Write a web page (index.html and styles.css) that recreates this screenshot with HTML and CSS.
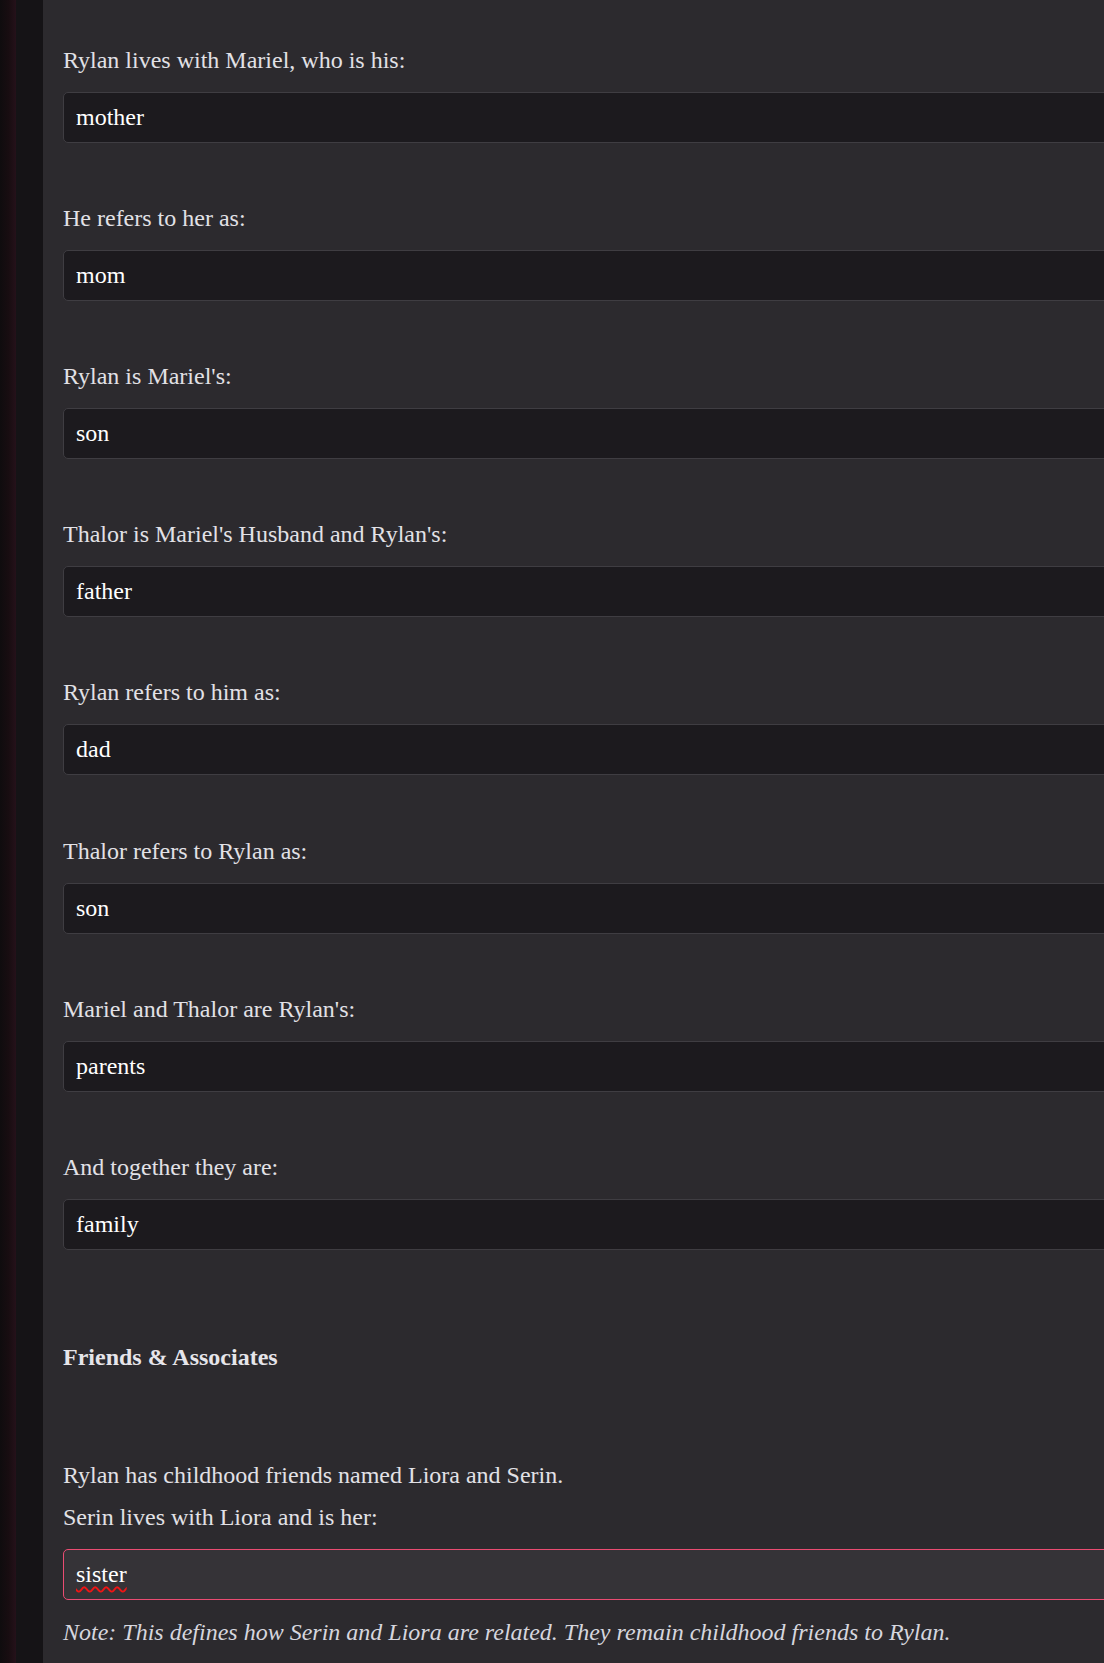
FILE: index.html
```html
<!DOCTYPE html>
<html lang="en">
<head>
  <meta charset="UTF-8" />
  <meta name="viewport" content="width=device-width, initial-scale=1.0"/>
  <title>Rylan - Relationships</title>
  <link rel="stylesheet" href="styles.css">
</head>
<body>
  <div class="rail"></div>
  <div class="gutter"></div>
  <main class="sheet">
    <form class="form" onsubmit="return false">
      <div class="field">
        <label for="rel-mother">Rylan lives with Mariel, who is his:</label>
        <input id="rel-mother" type="text" value="mother">
      </div>
      <div class="field">
        <label for="name-mother">He refers to her as:</label>
        <input id="name-mother" type="text" value="mom">
      </div>
      <div class="field">
        <label for="rel-son">Rylan is Mariel's:</label>
        <input id="rel-son" type="text" value="son">
      </div>
      <div class="field">
        <label for="rel-father">Thalor is Mariel's Husband and Rylan's:</label>
        <input id="rel-father" type="text" value="father">
      </div>
      <div class="field">
        <label for="name-father">Rylan refers to him as:</label>
        <input id="name-father" type="text" value="dad">
      </div>
      <div class="field">
        <label for="name-son">Thalor refers to Rylan as:</label>
        <input id="name-son" type="text" value="son">
      </div>
      <div class="field">
        <label for="rel-parents">Mariel and Thalor are Rylan's:</label>
        <input id="rel-parents" type="text" value="parents">
      </div>
      <div class="field">
        <label for="rel-family">And together they are:</label>
        <input id="rel-family" type="text" value="family">
      </div>

      <h3 class="section-title">Friends &amp; Associates</h3>

      <p class="intro">Rylan has childhood friends named Liora and Serin.</p>
      <div class="field field-last">
        <label for="rel-sister">Serin lives with Liora and is her:</label>
        <div class="input-wrap">
          <input id="rel-sister" class="active" type="text" value="sister">
          <!-- spellcheck squiggle, drawn under the typed word -->
          <span class="squiggle" aria-hidden="true">sister</span>
        </div>
      </div>
      <p class="note">Note: This defines how Serin and Liora are related. They remain childhood friends to Rylan.</p>
    </form>
  </main>
</body>
</html>
```

FILE: styles.css
```css
html, body {
  height: 100%;
}

body {
  margin: 0;
  display: flex;
  overflow: hidden;
  background: #2c2a2e;
  font-family: 'Liberation Serif', 'Times New Roman', serif;
  color: #e2e1e6;
}

.rail {
  flex: 0 0 16px;
  background: linear-gradient(to right, #0f0c0e, #180d11 55%, #25111a);
}

.gutter {
  flex: 0 0 27px;
  background: #151316;
}

.sheet {
  flex: 1 0 auto;
  padding: 45.6px 0 0 20px;
}

.form {
  display: flex;
  flex-direction: column;
  width: 1120px;
}

.field {
  display: flex;
  flex-direction: column;
  margin-bottom: 61.2px;
}

.field label {
  font-size: 24px;
  line-height: 28px;
  margin-bottom: 18px;
}

.field input {
  box-sizing: border-box;
  width: 100%;
  height: 51px;
  padding: 0 12px;
  border: 1px solid #3f3d42;
  border-radius: 5px;
  background: #1c1a1e;
  color: #ffffff;
  font-family: inherit;
  font-size: 24px;
  outline: none;
}

.field input.active {
  background: #353337;
  border-color: #ea4c72;
}

.input-wrap {
  position: relative;
}

.squiggle {
  position: absolute;
  left: 13px;
  top: 11px;
  font-size: 24px;
  line-height: 28px;
  color: transparent;
  text-decoration: underline wavy #f01414;
  text-decoration-thickness: 2px;
  text-underline-offset: 4px;
  pointer-events: none;
}

.section-title {
  margin: 31.7px 0 90.3px;
  font-size: 24px;
  line-height: 28px;
  font-weight: bold;
  color: #e6e5ea;
}

.intro {
  margin: 0 0 13.7px;
  font-size: 24px;
  line-height: 28px;
}

.field-last {
  margin-bottom: 17.9px;
}

.note {
  margin: 0;
  font-size: 24px;
  line-height: 28px;
  font-style: italic;
  color: #d6d6de;
}
```
